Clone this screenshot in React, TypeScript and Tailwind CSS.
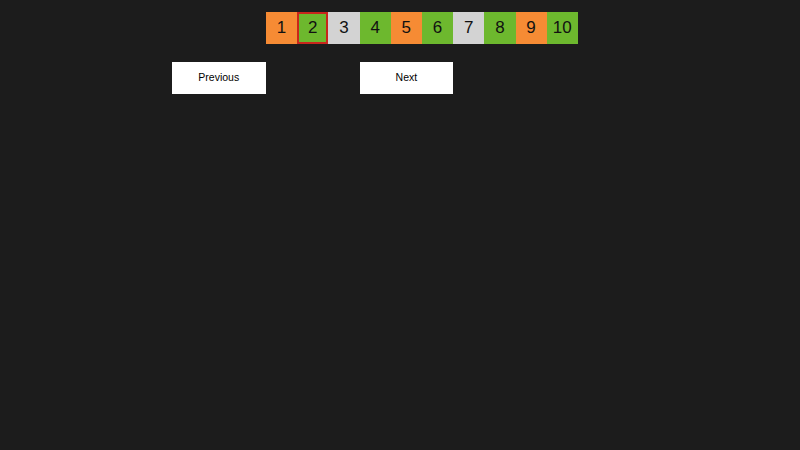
import React from "react";

const cells: { n: number; c: string; sel?: boolean }[] = [
  { n: 1, c: "bg-[#f68b34]" },
  { n: 2, c: "bg-[#6db82e]", sel: true },
  { n: 3, c: "bg-[#d3d3d3]" },
  { n: 4, c: "bg-[#6db82e]" },
  { n: 5, c: "bg-[#f68b34]" },
  { n: 6, c: "bg-[#6db82e]" },
  { n: 7, c: "bg-[#d3d3d3]" },
  { n: 8, c: "bg-[#6db82e]" },
  { n: 9, c: "bg-[#f68b34]" },
  { n: 10, c: "bg-[#6db82e]" },
];

export default function App() {
  return (
    <div
      className="w-[800px] h-[450px] bg-[#1c1c1c] pl-[172px] pt-[12px] flex flex-col"
      style={{ fontFamily: '"Liberation Sans", Arial, sans-serif' }}
    >
      <div className="flex ml-[94px]">
        {cells.map((x) => (
          <div
            key={x.n}
            className={`w-[31.2px] h-[31.5px] flex items-center justify-center text-[17px] text-[#111] ${x.c} ${
              x.sel ? "border-2 border-[#c8261c]" : ""
            }`}
          >
            {x.n}
          </div>
        ))}
      </div>
      <div className="flex gap-[94px] mt-[18.5px]">
        <button className="w-[93.6px] h-[31.5px] bg-white text-[10.5px] text-black flex items-center justify-center">
          Previous
        </button>
        <button className="w-[93.6px] h-[31.5px] bg-white text-[10.5px] text-black flex items-center justify-center">
          Next
        </button>
      </div>
    </div>
  );
}
